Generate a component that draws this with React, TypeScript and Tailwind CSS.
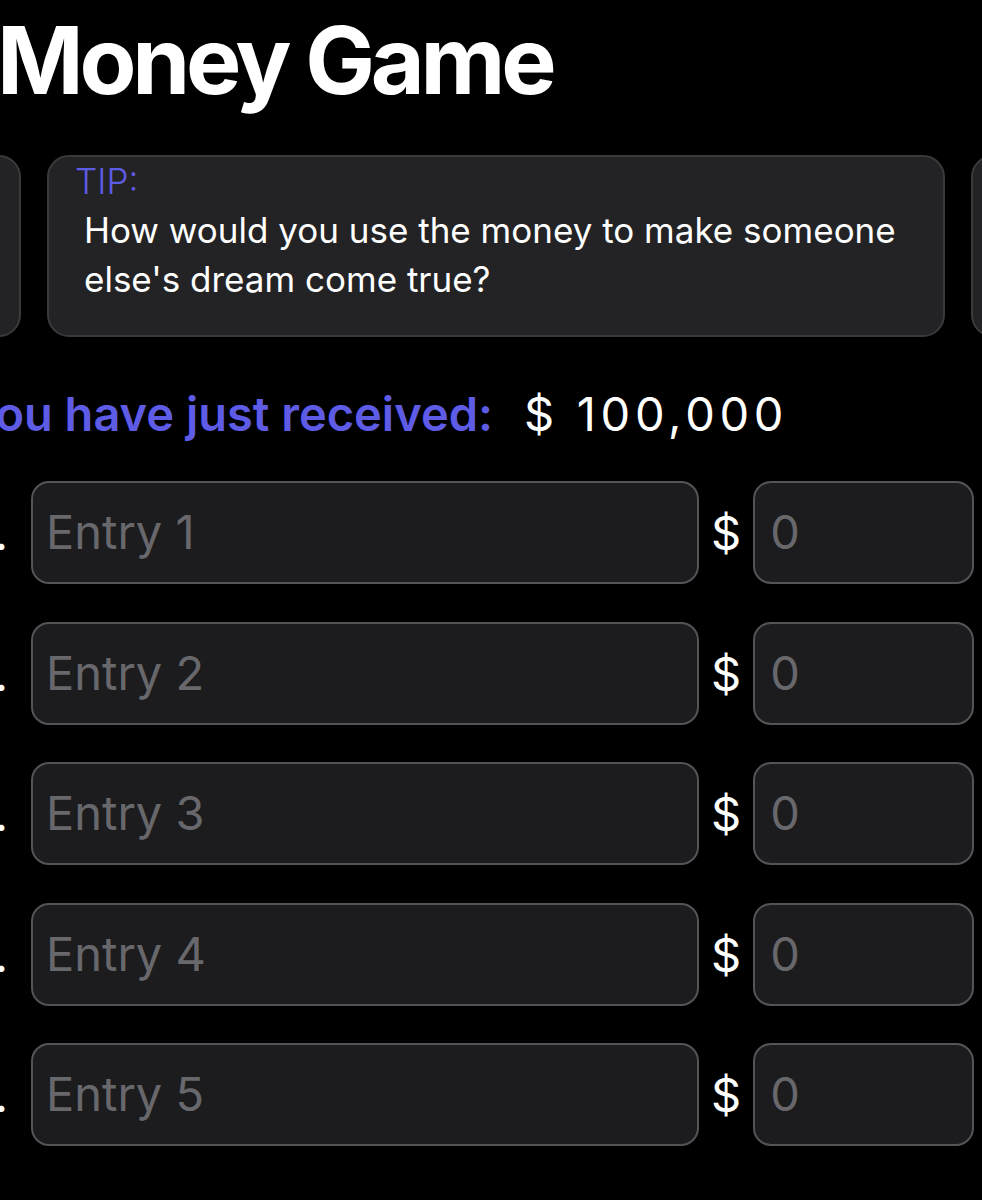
import React from "react";

const font = { fontFamily: "Inter, 'Noto Sans', sans-serif" };

function TipCard({ children }: { children?: React.ReactNode }) {
  return (
    <div className="w-[898px] h-[182px] shrink-0 rounded-[22px] border-2 border-[#3a3a3c] bg-[#232325]">
      {children}
    </div>
  );
}

function EntryRow({ n }: { n: number }) {
  return (
    <div className="flex items-center h-[103px]">
      <div className="w-[8px] flex justify-end whitespace-nowrap text-white text-[47px] leading-none">
        {n}.
      </div>
      <div className="ml-[23px] w-[668px] h-[103px] shrink-0 rounded-[18px] border-2 border-[#545458] bg-[#1c1c1e] flex items-center pl-[13px] text-[47px] text-[#68686c]">
        Entry {n}
      </div>
      <div className="ml-[12px] text-white text-[47px] leading-none">$</div>
      <div className="ml-[12px] w-[221px] h-[103px] shrink-0 rounded-[18px] border-2 border-[#545458] bg-[#1c1c1e] flex items-center pl-[15px] text-[47px] text-[#68686c]">
        0
      </div>
    </div>
  );
}

export default function App() {
  return (
    <div className="w-[982px] min-h-[1200px] bg-black overflow-hidden" style={font}>
      <h1 className="pt-[14px] ml-[-3px] text-white font-bold text-[93px] leading-none tracking-[-0.045em] whitespace-nowrap">
        Money Game
      </h1>
      <div className="mt-[48px] ml-[-877px] flex gap-[26px]">
        <TipCard />
        <TipCard>
          <div className="pl-[26px] pr-[20px] text-[35px] leading-[49px]">
            <div className="text-[#5e5ce6] font-light">TIP:</div>
            <div className="pl-[9px] text-white">
              How would you use the money to make someone else's dream come true?
            </div>
          </div>
        </TipCard>
        <TipCard />
      </div>
      <div className="mt-[49px] flex items-baseline text-[47px] leading-[56px] whitespace-nowrap">
        <div className="w-[493px] shrink-0 flex justify-end text-[#5e5ce6] font-semibold">
          You have just received:
        </div>
        <div className="ml-[31px] text-white tracking-[0.1em]">$ 100,000</div>
      </div>
      <div className="mt-[39px] flex flex-col gap-[37.5px]">
        {[1, 2, 3, 4, 5].map((n) => (
          <EntryRow key={n} n={n} />
        ))}
      </div>
    </div>
  );
}
